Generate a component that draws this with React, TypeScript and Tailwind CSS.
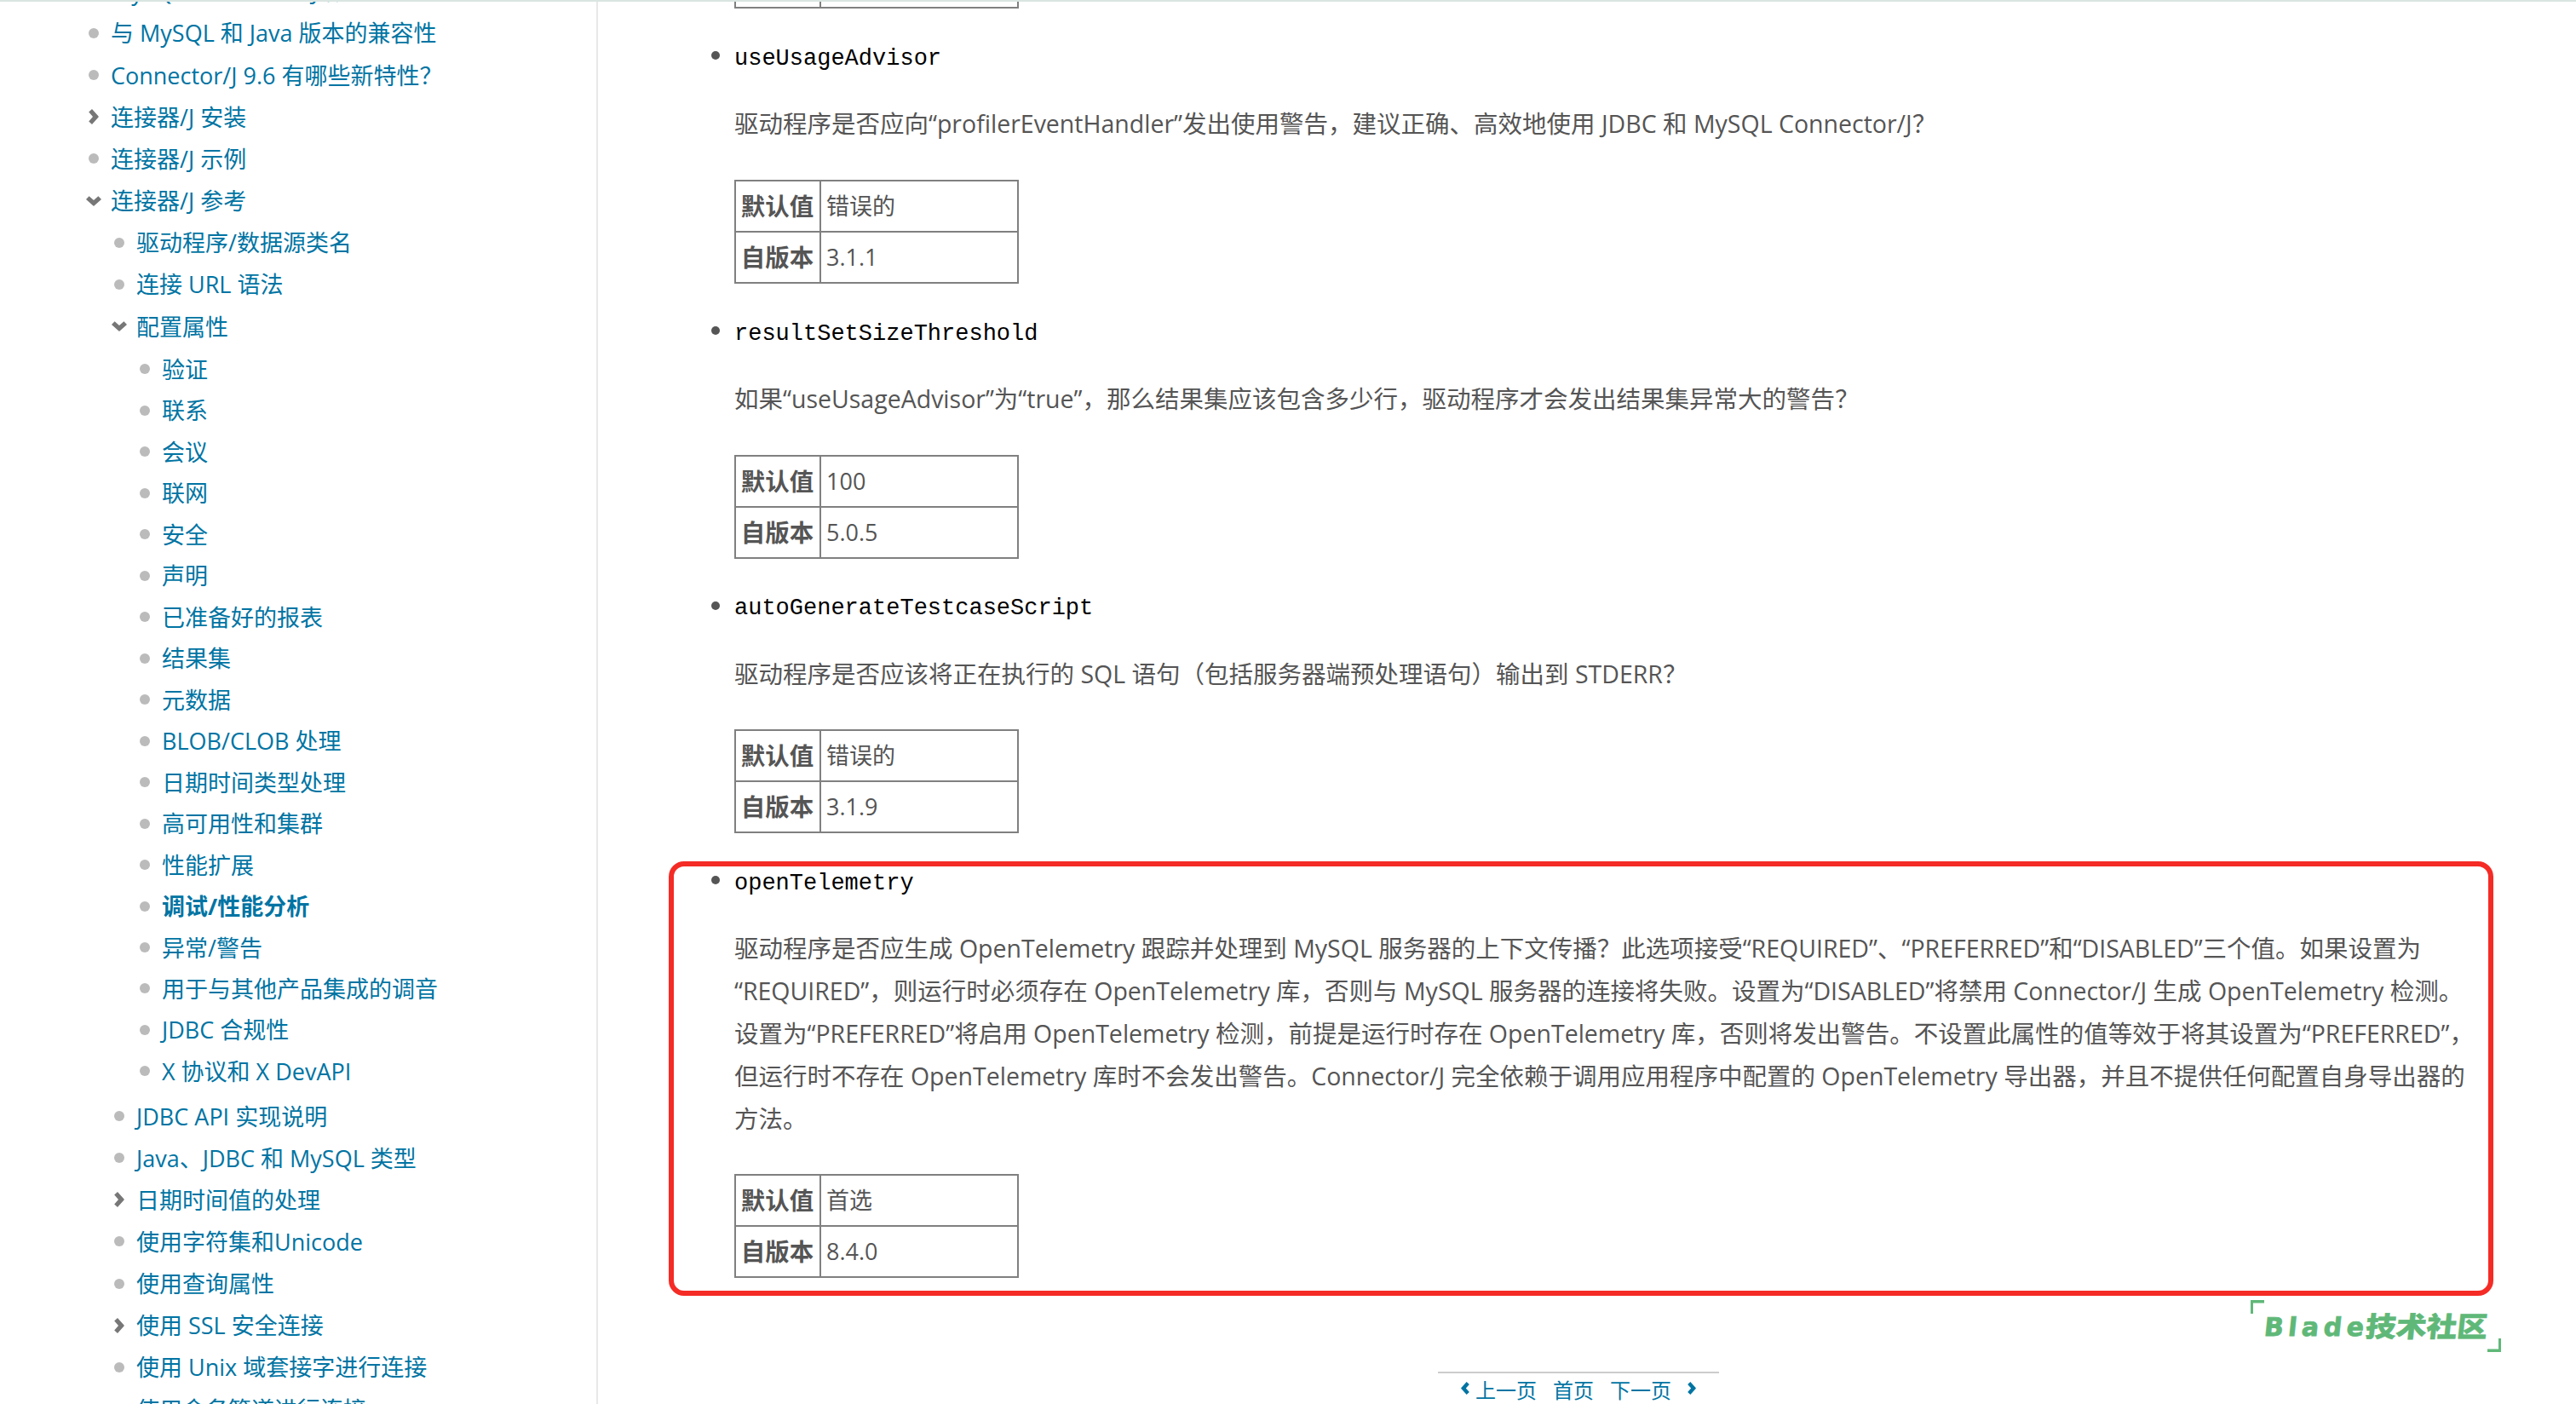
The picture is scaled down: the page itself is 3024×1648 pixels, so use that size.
import React from "react";

type Marker = "dot" | "right" | "down";
type NavItem = { label: string; marker: Marker; current?: boolean; children?: NavItem[] };

const dot = (label: string, current = false): NavItem => ({ label, marker: "dot", current });

const configuration: NavItem[] = [
  dot("验证"),
  dot("联系"),
  dot("会议"),
  dot("联网"),
  dot("安全"),
  dot("声明"),
  dot("已准备好的报表"),
  dot("结果集"),
  dot("元数据"),
  dot("BLOB/CLOB 处理"),
  dot("日期时间类型处理"),
  dot("高可用性和集群"),
  dot("性能扩展"),
  dot("调试/性能分析", true),
  dot("异常/警告"),
  dot("用于与其他产品集成的调音"),
  dot("JDBC 合规性"),
  dot("X 协议和 X DevAPI"),
];

const reference: NavItem[] = [
  dot("驱动程序/数据源类名"),
  dot("连接 URL 语法"),
  { label: "配置属性", marker: "down", children: configuration },
  dot("JDBC API 实现说明"),
  dot("Java、JDBC 和 MySQL 类型"),
  { label: "日期时间值的处理", marker: "right" },
  dot("使用字符集和Unicode"),
  dot("使用查询属性"),
  { label: "使用 SSL 安全连接", marker: "right" },
  dot("使用 Unix 域套接字进行连接"),
  dot("使用命名管道进行连接"),
];

const nav: NavItem[] = [
  dot("MySQL Connector/J 概述"),
  dot("与 MySQL 和 Java 版本的兼容性"),
  dot("Connector/J 9.6 有哪些新特性？"),
  { label: "连接器/J 安装", marker: "right" },
  dot("连接器/J 示例"),
  { label: "连接器/J 参考", marker: "down", children: reference },
];

type Property = { name: string; lines: string[]; value: string; since: string };

const properties: Property[] = [
  {
    name: "useUsageAdvisor",
    lines: ["驱动程序是否应向“profilerEventHandler”发出使用警告，建议正确、高效地使用 JDBC 和 MySQL Connector/J？"],
    value: "错误的",
    since: "3.1.1",
  },
  {
    name: "resultSetSizeThreshold",
    lines: ["如果“useUsageAdvisor”为“true”，那么结果集应该包含多少行，驱动程序才会发出结果集异常大的警告？"],
    value: "100",
    since: "5.0.5",
  },
  {
    name: "autoGenerateTestcaseScript",
    lines: ["驱动程序是否应该将正在执行的 SQL 语句（包括服务器端预处理语句）输出到 STDERR？"],
    value: "错误的",
    since: "3.1.9",
  },
  {
    name: "openTelemetry",
    lines: [
      "驱动程序是否应生成 OpenTelemetry 跟踪并处理到 MySQL 服务器的上下文传播？此选项接受“REQUIRED”、“PREFERRED”和“DISABLED”三个值。如果设置为",
      "“REQUIRED”，则运行时必须存在 OpenTelemetry 库，否则与 MySQL 服务器的连接将失败。设置为“DISABLED”将禁用 Connector/J 生成 OpenTelemetry 检测。",
      "设置为“PREFERRED”将启用 OpenTelemetry 检测，前提是运行时存在 OpenTelemetry 库，否则将发出警告。不设置此属性的值等效于将其设置为“PREFERRED”，",
      "但运行时不存在 OpenTelemetry 库时不会发出警告。Connector/J 完全依赖于调用应用程序中配置的 OpenTelemetry 导出器，并且不提供任何配置自身导出器的",
      "方法。",
    ],
    value: "首选",
    since: "8.4.0",
  },
];

function Chevron({ className }: { className: string }) {
  return (
    <svg viewBox="0 0 12 18" className={className} fill="currentColor">
      <path d="M4 0 L11.6 8.4 Q12 9 11.6 9.6 L4 18 L0.2 14.4 L5 9 L0.2 3.6 Z" />
    </svg>
  );
}

function MarkerIcon({ marker }: { marker: Marker }) {
  if (marker === "dot") return <span className="block size-3 rounded-full bg-[#bbbbbb]" />;
  return (
    <Chevron
      className={marker === "down" ? "h-[18px] w-3 rotate-90 text-[#777777]" : "h-[18px] w-3 text-[#777777]"}
    />
  );
}

function Tree({ items, depth = 0 }: { items: NavItem[]; depth?: number }) {
  return (
    <ul className={depth === 0 ? "" : depth === 1 ? "pl-[30px]" : "pt-[1.6px] pb-[3.8px] pl-[30px]"}>
      {items.map((item) => (
        <li key={item.label}>
          <div className={depth === 2 ? "flex h-[48.47px] items-center" : "flex h-[49.17px] items-center"}>
            <span className="flex w-[26px] shrink-0 items-center">
              <MarkerIcon marker={item.marker} />
            </span>
            <a className={item.current ? "pt-[1.5px] font-bold whitespace-nowrap" : "pt-[1.5px] whitespace-nowrap"}>
              {item.label}
            </a>
          </div>
          {item.children && <Tree items={item.children} depth={depth + 1} />}
        </li>
      ))}
    </ul>
  );
}

function VersionTable({ value, since }: { value: string; since: string }) {
  const rows = [
    ["默认值", value],
    ["自版本", since],
  ];
  return (
    <div className="grid w-[334px] grid-cols-[98px_1fr] gap-[2px] border-2 border-[#808080] bg-[#808080] leading-[58px]">
      {rows.map(([head, cell]) => (
        <React.Fragment key={head}>
          <div className="h-[58px] bg-white pr-px text-center text-[28.5px] font-bold">{head}</div>
          <div className="h-[58px] bg-white pl-[6px] text-[27px]">{cell}</div>
        </React.Fragment>
      ))}
    </div>
  );
}

function PropertyItem({ item }: { item: Property }) {
  return (
    <li className="pb-[32.7px] text-[28.5px] leading-[49.875px]">
      <div className="flex items-center">
        <span className="-mt-[5px] mr-[17px] -ml-[27px] size-[10px] rounded-full bg-[#555555]" />
        <code className="translate-y-[1.5px] font-['Liberation_Mono',monospace] text-[27px] text-black">{item.name}</code>
      </div>
      <p className="mt-[28.6px] mb-[39.6px]">
        {item.lines.map((line) => (
          <span key={line} className="block whitespace-nowrap">
            {line}
          </span>
        ))}
      </p>
      <VersionTable value={item.value} since={item.since} />
    </li>
  );
}

function Watermark() {
  return (
    <svg className="absolute top-[1526px] left-[2642px] h-[61px] w-[294px]" viewBox="0 0 294 61" fill="#5fb878">
      <path d="M0 0H16V3.5H3V16H0Z" />
      <path d="M278 61H294V45H291V57.5H278Z" />
      <g transform="translate(15 42) skewX(-6)">
        <text
          className="font-['DejaVu_Sans',sans-serif] font-bold"
          fontSize="30"
          stroke="#5fb878"
          strokeWidth="0.8"
          textLength="117"
          lengthAdjust="spacing"
        >
          Blade
        </text>
        <text
          x="119"
          y="1"
          transform="scale(1 0.9)"
          className="font-['Noto_Sans_CJK_SC',sans-serif] font-black"
          fontSize="36"
          stroke="#5fb878"
          strokeWidth="0.6"
          textLength="143"
          lengthAdjust="spacingAndGlyphs"
        >
          技术社区
        </text>
      </g>
    </svg>
  );
}

export default function App() {
  return (
    <div className="relative flex h-[1648px] w-[3024px] overflow-hidden bg-white font-['Open_Sans','Noto_Sans_CJK_SC',sans-serif] text-[#555555]">
      <div className="absolute inset-x-0 top-0 z-10 h-[2px] bg-[#d9e5e0]" />

      <aside className="h-full w-[702px] shrink-0 overflow-hidden border-r-2 border-[#e8e8e8] pl-[104px] text-[27px] text-[#0074a3]">
        <div className="-mt-[34.8px]">
          <Tree items={nav} />
        </div>
      </aside>

      <main className="h-full min-w-0 flex-1 overflow-hidden pl-[160px]">
        <div className="-mt-[112px] pb-[33px]">
          <VersionTable value="" since="" />
        </div>
        <ul>
          {properties.map((item) => (
            <PropertyItem key={item.name} item={item} />
          ))}
        </ul>
        <nav className="mt-[76.5px] ml-[826px] flex h-[50px] w-[330px] items-center border-t-2 border-[#cccccc] pb-[7px] pl-[27px] text-2xl whitespace-nowrap text-[#0074a3]">
          <Chevron className="mr-[7px] h-[15px] w-[10px] -translate-y-[3px] rotate-180" />
          <a className="mr-[19px]">上一页</a>
          <a className="mr-[19px]">首页</a>
          <a className="mr-[19px]">下一页</a>
          <Chevron className="h-[15px] w-[10px] -translate-y-[3px]" />
        </nav>
      </main>

      <div className="absolute top-[1011px] left-[785px] h-[510px] w-[2142px] rounded-[18px] border-6 border-[#f52b26]" />
      <Watermark />
    </div>
  );
}
